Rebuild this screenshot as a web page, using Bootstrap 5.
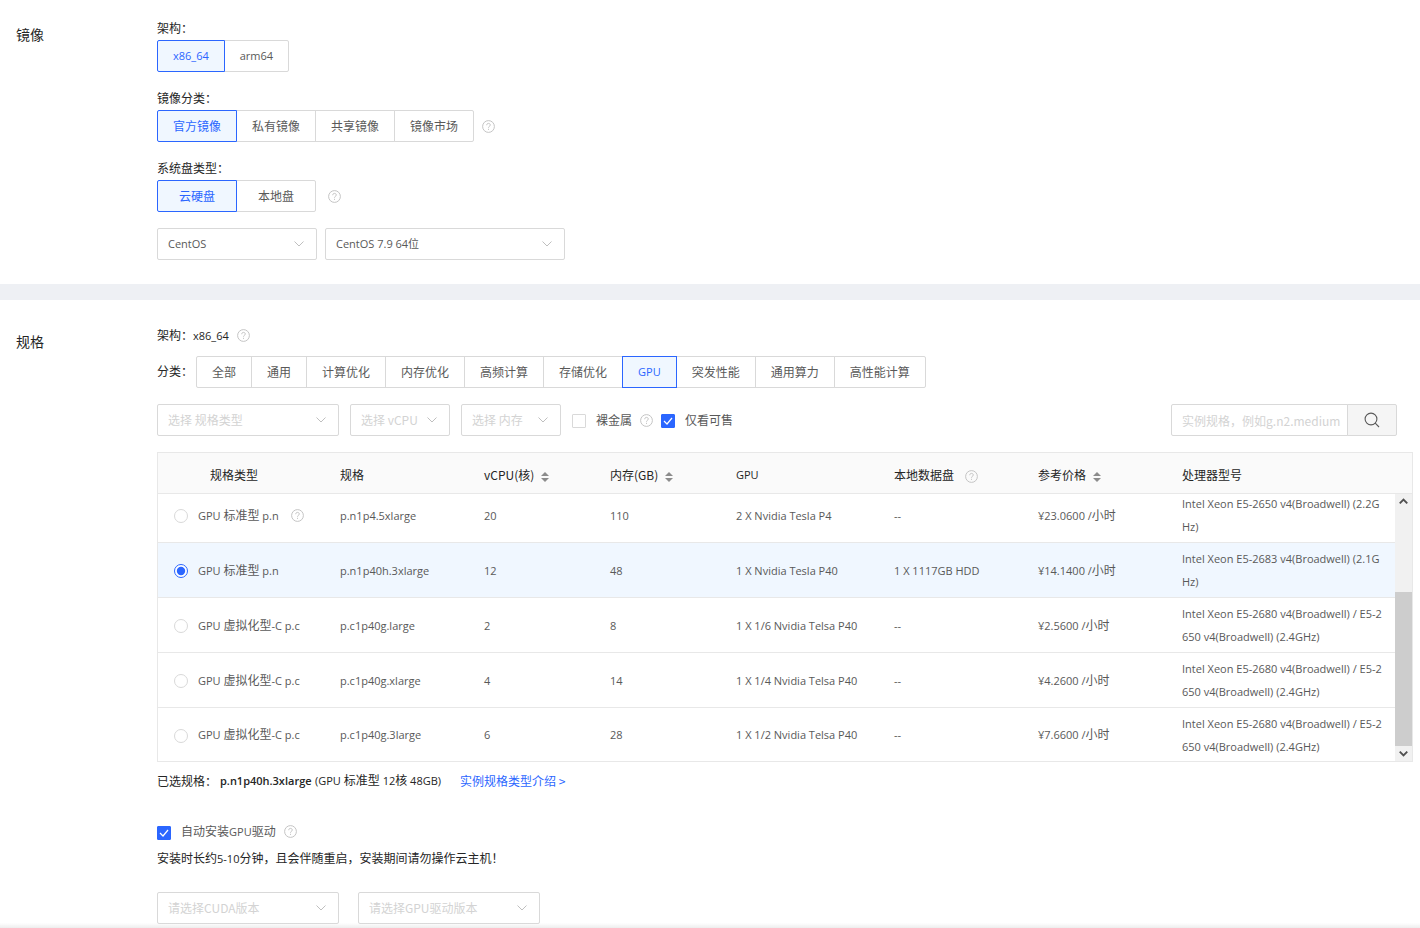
<!DOCTYPE html>
<html lang="zh-CN">
<head>
<meta charset="utf-8">
<meta name="viewport" content="width=device-width, initial-scale=1">
<title>创建云主机</title>
<link href="https://cdn.jsdelivr.net/npm/bootstrap@5.3.0/dist/css/bootstrap.min.css" rel="stylesheet">
<style>
:root { --brand: #2b66ff; --line: #d9d9d9; --soft: #e8e8e8; --tint: #f0f7ff; --ink: #252525; --muted: #595959; --hint: #d3d3d3; }
body { font-family: "Noto Sans CJK SC", sans-serif; font-size: 12px; line-height: 24px; color: var(--ink); background: #fff; }
.en, .opts .btn.en, .pick.en { font-family: "Open Sans", "Noto Sans CJK SC", sans-serif; font-size: 11px; }
.zh { font-size: 12px; }
.sec-title { width: 157px; padding: 6px 0 0 16px; font-size: 14px; font-weight: 400; line-height: 24px; }
.divider { height: 16px; background: #eef0f4; }
.sec-image { padding: 16px 0 24px; }
.sec-spec { padding: 23px 0 6px; }
.spec-main { padding-right: 7px; }
.gap-row { margin-bottom: 14px; }
.opts .btn { height: 32px; padding: 0 15px; font-size: 12px; line-height: 30px; color: var(--muted); background: #fff; border-color: var(--line); border-radius: 2px; }
.opts .btn.active { color: var(--brand); background: var(--tint); border-color: var(--brand); }
.opts.wide .btn { min-width: 80px; }
.help { width: 13px; height: 13px; flex: none; fill: none; stroke: #c4c4c4; stroke-width: 1; }
.pick { height: 32px; padding: 0 28px 0 10px; font-size: 12px; line-height: 30px; color: var(--muted); border: 1px solid var(--line); border-radius: 2px; background-size: 10px 6px; background-position: right 12px center; background-image: url("data:image/svg+xml,%3Csvg xmlns='http://www.w3.org/2000/svg' viewBox='0 0 10 6'%3E%3Cpath d='M.5.5 5 5 9.5.5' fill='none' stroke='%23bfbfbf'/%3E%3C/svg%3E"); }
.pick.blank { color: var(--hint); }
.w-160 { width: 160px; } .w-240 { width: 240px; } .w-182 { width: 182px; } .w-100px { width: 100px; }
.tick { width: 14px; height: 14px; margin: 2px 2px 0 0; border: 1px solid var(--line); flex: none; }
.form-check-input.tick[type=checkbox] { border-radius: 1px; }
.form-check-input.tick:checked { background-color: var(--brand); border-color: var(--brand); }
.form-check-input.tick:checked[type=checkbox] { background-size: 12px; background-image: url("data:image/svg+xml,%3Csvg xmlns='http://www.w3.org/2000/svg' viewBox='0 0 12 12'%3E%3Cpath d='m2 6 3 3 5-6' fill='none' stroke='%23fff' stroke-width='1.2'/%3E%3C/svg%3E"); }
.form-check-input.tick:checked[type=radio] { background-color: #fff; background-size: 14px; background-image: url("data:image/svg+xml,%3Csvg xmlns='http://www.w3.org/2000/svg' viewBox='0 0 14 14'%3E%3Ccircle cx='7' cy='7' r='4.2' fill='%232b66ff'/%3E%3C/svg%3E"); }
.soft-label { color: var(--muted); }
.kind { width: 39px; line-height: 30px; }
.filters { gap: 11px; }
.search { width: 226px; margin-right: 16px; }
.search .form-control { height: 32px; padding: 0 0 0 10px; font-size: 12px; border-color: var(--line); border-radius: 2px; }
.search .form-control::placeholder { color: var(--hint); }
.search .btn { width: 50px; height: 32px; padding: 0; background: #f5f5f5; border-color: var(--line); border-radius: 2px; }
.grid-box { border: 1px solid var(--soft); }
.grid-box table { table-layout: fixed; margin: 0; width: 100%; border-collapse: separate; border-spacing: 0; }
.grid-head { background: #fafafa; border-bottom: 1px solid var(--soft); padding-right: 17px; }
.grid-head th { height: 40px; padding: 4px 0 0 16px; font-weight: 400; }
.grid-head th:first-child { padding-left: 52px; }
.grid-body { height: 267px; overflow: hidden; }
.grid-rows { min-width: 0; justify-content: flex-end; }
.grid-rows td { height: 55px; padding: 0 0 0 16px; line-height: 23px; color: var(--muted); border-bottom: 1px solid var(--soft); vertical-align: middle; }
.grid-rows tr:last-child td { height: 53px; border-bottom: 0; }
.grid-rows td:last-child { padding-right: 10px; word-break: break-all; }
.grid-rows tr.chosen td { background: var(--tint); }
.c-type { width: 166px; } .c-spec { width: 144px; } .c-num { width: 126px; } .c-gpu { width: 158px; }
.type-cell { gap: 8px; }
.type-cell .help { margin-left: 4px; }
.bar { width: 17px; background: #f1f1f1; flex: none; }
.bar svg { height: 15px; width: 17px; fill: none; stroke: #505050; stroke-width: 2; }
.thumb { height: 154px; background: #cdcdcd; }
.sorter { width: 8px; height: 10px; fill: #8c8c8c; }
.picked { margin-top: 7px; }
.picked-name { width: 95px; margin-left: 3px; font-weight: 600; }
a.intro { margin-left: 19px; color: var(--brand); text-decoration: none; }
.driver { margin: 26px 0 2px; }
.versions { margin-top: 21px; gap: 19px; }
.foot-shade { height: 5px; background: linear-gradient(#fff0, #ededed); }
</style>
</head>
<body>
<svg class="d-none">
  <symbol id="q" viewBox="0 0 13 13"><circle cx="6.5" cy="6.5" r="5.9"/><path d="M4.700 5.200c0-2.500 3.600-2.300 3.600-.2 0 1.300-1.800 1.300-1.800 2.700M6.500 8.800v1.100"/></symbol>
  <symbol id="s" viewBox="0 0 8 10"><path d="M4 0 8 4H0zM4 10 0 6h8z"/></symbol>
</svg>
<section class="sec-image d-flex">
  <h2 class="sec-title m-0 flex-shrink-0">镜像</h2>
  <div class="flex-grow-1">
    <div>架构：</div>
    <div class="gap-row d-flex">
      <div class="btn-group opts" role="group" aria-label="架构"><button type="button" class="btn en active">x86_64</button><button type="button" class="btn en">arm64</button></div>
    </div>
    <div>镜像分类：</div>
    <div class="gap-row d-flex align-items-center gap-2">
      <div class="btn-group opts" role="group" aria-label="镜像分类"><button type="button" class="btn active">官方镜像</button><button type="button" class="btn">私有镜像</button><button type="button" class="btn">共享镜像</button><button type="button" class="btn">镜像市场</button></div>
      <svg class="help"><use href="#q"/></svg>
    </div>
    <div>系统盘类型：</div>
    <div class="mb-3 d-flex align-items-center gap-2">
      <div class="btn-group opts wide" role="group" aria-label="系统盘类型"><button type="button" class="btn active">云硬盘</button><button type="button" class="btn">本地盘</button></div>
      <svg class="help ms-1"><use href="#q"/></svg>
    </div>
    <div class="d-flex gap-2">
      <select class="form-select pick en w-160" aria-label="操作系统"><option>CentOS</option></select>
      <select class="form-select pick en w-240" aria-label="系统版本"><option>CentOS 7.9 64位</option></select>
    </div>
  </div>
</section>
<div class="divider"></div>
<section class="sec-spec d-flex">
  <h2 class="sec-title m-0 flex-shrink-0">规格</h2>
  <div class="flex-grow-1 spec-main">
    <div class="d-flex align-items-center gap-2 mb-2"><span>架构：<span class="en">x86_64</span></span><svg class="help"><use href="#q"/></svg></div>
    <div class="d-flex mb-3">
      <span class="kind">分类：</span>
      <div class="btn-group opts" role="group" aria-label="分类"><button type="button" class="btn">全部</button><button type="button" class="btn">通用</button><button type="button" class="btn">计算优化</button><button type="button" class="btn">内存优化</button><button type="button" class="btn">高频计算</button><button type="button" class="btn">存储优化</button><button type="button" class="btn en active">GPU</button><button type="button" class="btn">突发性能</button><button type="button" class="btn">通用算力</button><button type="button" class="btn">高性能计算</button></div>
    </div>
    <div class="d-flex align-items-center mb-3 filters">
      <select class="form-select pick blank w-182" aria-label="规格类型"><option>选择 规格类型</option></select>
      <select class="form-select pick blank w-100px" aria-label="vCPU"><option>选择 vCPU</option></select>
      <select class="form-select pick blank w-100px" aria-label="内存"><option>选择 内存</option></select>
      <div class="d-flex align-items-center gap-2 soft-label">
        <input class="form-check-input tick" type="checkbox" id="bare"><label for="bare">裸金属</label>
        <svg class="help"><use href="#q"/></svg>
        <input class="form-check-input tick" type="checkbox" id="sale" checked><label for="sale">仅看可售</label>
      </div>
      <div class="input-group search ms-auto flex-nowrap">
        <input type="text" class="form-control" placeholder="实例规格，例如g.n2.medium" aria-label="实例规格">
        <button type="button" class="btn d-flex align-items-center justify-content-center" aria-label="搜索"><svg width="16" height="16" viewBox="0 0 16 16" fill="none" stroke="#595959" stroke-width="1.1"><circle cx="7" cy="7" r="5.900"/><path d="m11.200 11.200 3.800 3.800"/></svg></button>
      </div>
    </div>
    <div class="grid-box">
      <div class="grid-head">
        <table>
          <colgroup><col class="c-type"><col class="c-spec"><col class="c-num"><col class="c-num"><col class="c-gpu"><col class="c-spec"><col class="c-spec"><col></colgroup>
          <thead><tr>
            <th>规格类型</th><th>规格</th>
            <th>vCPU(核) <svg class="sorter ms-1"><use href="#s"/></svg></th>
            <th>内存(GB) <svg class="sorter ms-1"><use href="#s"/></svg></th>
            <th class="en">GPU</th>
            <th>本地数据盘 <svg class="help ms-2"><use href="#q"/></svg></th>
            <th>参考价格 <svg class="sorter ms-1"><use href="#s"/></svg></th>
            <th>处理器型号</th>
          </tr></thead>
        </table>
      </div>
      <div class="grid-body d-flex">
        <div class="grid-rows flex-grow-1 d-flex flex-column">
          <table class="en">
            <colgroup><col class="c-type"><col class="c-spec"><col class="c-num"><col class="c-num"><col class="c-gpu"><col class="c-spec"><col class="c-spec"><col></colgroup>
            <tbody>
              <tr><td><div class="d-flex align-items-center type-cell"><input class="form-check-input tick" type="radio" name="spec" id="r1"><label for="r1">GPU <span class="zh">标准型</span> p.n</label><svg class="help"><use href="#q"/></svg></div></td><td>p.n1p4.5xlarge</td><td>20</td><td>110</td><td>2 X Nvidia Tesla P4</td><td>--</td><td>¥23.0600 /<span class="zh">小时</span></td><td>Intel Xeon E5-2650 v4(Broadwell) (2.2GHz)</td></tr>
              <tr class="chosen"><td><div class="d-flex align-items-center type-cell"><input class="form-check-input tick" type="radio" name="spec" id="r2" checked><label for="r2">GPU <span class="zh">标准型</span> p.n</label></div></td><td>p.n1p40h.3xlarge</td><td>12</td><td>48</td><td>1 X Nvidia Tesla P40</td><td>1 X 1117GB HDD</td><td>¥14.1400 /<span class="zh">小时</span></td><td>Intel Xeon E5-2683 v4(Broadwell) (2.1GHz)</td></tr>
              <tr><td><div class="d-flex align-items-center type-cell"><input class="form-check-input tick" type="radio" name="spec" id="r3"><label for="r3">GPU <span class="zh">虚拟化型</span>-C p.c</label></div></td><td>p.c1p40g.large</td><td>2</td><td>8</td><td>1 X 1/6 Nvidia Telsa P40</td><td>--</td><td>¥2.5600 /<span class="zh">小时</span></td><td>Intel Xeon E5-2680 v4(Broadwell) / E5-2650 v4(Broadwell) (2.4GHz)</td></tr>
              <tr><td><div class="d-flex align-items-center type-cell"><input class="form-check-input tick" type="radio" name="spec" id="r4"><label for="r4">GPU <span class="zh">虚拟化型</span>-C p.c</label></div></td><td>p.c1p40g.xlarge</td><td>4</td><td>14</td><td>1 X 1/4 Nvidia Telsa P40</td><td>--</td><td>¥4.2600 /<span class="zh">小时</span></td><td>Intel Xeon E5-2680 v4(Broadwell) / E5-2650 v4(Broadwell) (2.4GHz)</td></tr>
              <tr><td><div class="d-flex align-items-center type-cell"><input class="form-check-input tick" type="radio" name="spec" id="r5"><label for="r5">GPU <span class="zh">虚拟化型</span>-C p.c</label></div></td><td>p.c1p40g.3large</td><td>6</td><td>28</td><td>1 X 1/2 Nvidia Telsa P40</td><td>--</td><td>¥7.6600 /<span class="zh">小时</span></td><td>Intel Xeon E5-2680 v4(Broadwell) / E5-2650 v4(Broadwell) (2.4GHz)</td></tr>
            </tbody>
          </table>
        </div>
        <div class="bar d-flex flex-column">
          <svg viewBox="0 0 17 16"><path d="m4.500 10 4-4 4 4"/></svg>
          <div class="thumb mt-auto"></div>
          <svg viewBox="0 0 17 16"><path d="m4.500 6 4 4 4-4"/></svg>
        </div>
      </div>
    </div>
    <div class="d-flex picked"><span>已选规格：</span><span class="picked-name en">p.n1p40h.3xlarge</span><span class="en">(GPU <span class="zh">标准型</span> 12<span class="zh">核</span> 48GB)</span><a href="#" class="intro">实例规格类型介绍 &gt;</a></div>
    <div class="d-flex align-items-center gap-2 soft-label driver"><input class="form-check-input tick" type="checkbox" id="drv" checked><label for="drv">自动安装<span class="en">GPU</span>驱动</label><svg class="help"><use href="#q"/></svg></div>
    <div>安装时长约<span class="en">5-10</span>分钟，且会伴随重启，安装期间请勿操作云主机！</div>
    <div class="d-flex versions">
      <select class="form-select pick blank w-182" aria-label="CUDA版本"><option>请选择CUDA版本</option></select>
      <select class="form-select pick blank w-182" aria-label="GPU驱动版本"><option>请选择GPU驱动版本</option></select>
    </div>
  </div>
</section>
<div class="foot-shade fixed-bottom"></div>
<script src="https://cdn.jsdelivr.net/npm/bootstrap@5.3.0/dist/js/bootstrap.bundle.min.js"></script>
</body>
</html>
